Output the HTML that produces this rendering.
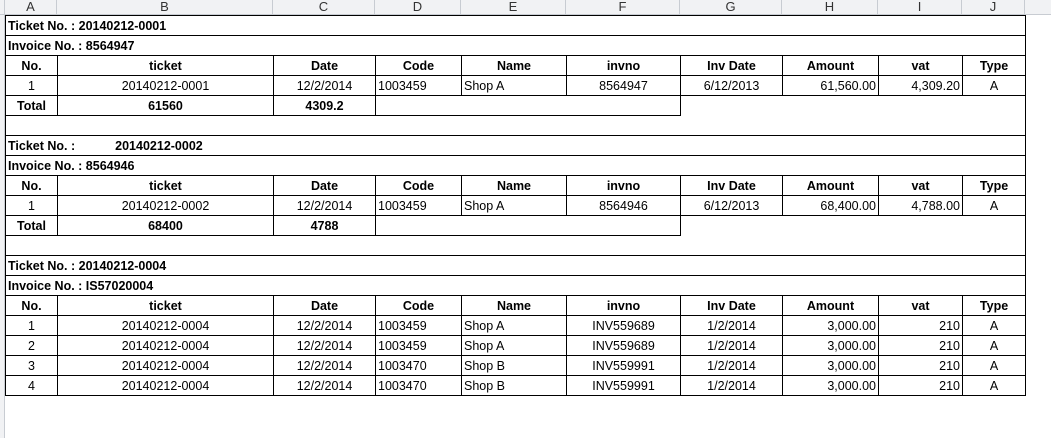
<!DOCTYPE html>
<html><head><style>
body{margin:0;width:1051px;height:438px;background:#fff;overflow:hidden;position:relative;font-family:"Liberation Sans",sans-serif;font-size:12.5px;color:#000}
.hdr{position:absolute;top:0;left:0;width:1051px;height:15px;background:#f1f2f4;border-bottom:1px solid #c8ccd2;box-sizing:border-box}
.hdr div{position:absolute;top:0;height:15px;border-right:1px solid #c8ccd2;box-sizing:border-box;text-align:center;font-size:13px;line-height:14px;color:#333}
.rh{position:absolute;left:0;top:15px;width:5px;height:423px;background:#f1f2f4;border-right:1px solid #c8ccd2;box-sizing:border-box}
table{position:absolute;left:5px;top:15px;border-collapse:collapse;table-layout:fixed;width:1021px}
td{height:19px;padding:0 2px;border:1px solid #000;white-space:nowrap;overflow:hidden;line-height:18px}
.b{font-weight:bold}
.c{text-align:center}.r{text-align:right}
.nb{border-top:none;border-bottom:none;border-left:none}
.blank td{border-top:none;border-bottom:none}
</style></head><body>
<div class="hdr">
<div style="left:0;width:5px"></div>
<div style="left:5px;width:52px">A</div>
<div style="left:57px;width:216px">B</div>
<div style="left:273px;width:102px">C</div>
<div style="left:375px;width:86px">D</div>
<div style="left:461px;width:105px">E</div>
<div style="left:566px;width:114px">F</div>
<div style="left:680px;width:102px">G</div>
<div style="left:782px;width:96px">H</div>
<div style="left:878px;width:84px">I</div>
<div style="left:962px;width:63px">J</div>
</div>
<div class="rh"></div>
<table>
<colgroup><col style="width:52px"><col style="width:216px"><col style="width:102px"><col style="width:86px"><col style="width:105px"><col style="width:114px"><col style="width:102px"><col style="width:96px"><col style="width:84px"><col style="width:63px"></colgroup>
<tr><td colspan="10" class="b">Ticket No. : 20140212-0001</td></tr>
<tr><td colspan="10" class="b">Invoice No. : 8564947</td></tr>
<tr class="b c"><td>No.</td><td>ticket</td><td>Date</td><td>Code</td><td>Name</td><td>invno</td><td>Inv Date</td><td>Amount</td><td>vat</td><td>Type</td></tr>
<tr><td class="c">1</td><td class="c">20140212-0001</td><td class="c">12/2/2014</td><td>1003459</td><td>Shop A</td><td class="c">8564947</td><td class="c">6/12/2013</td><td class="r">61,560.00</td><td class="r">4,309.20</td><td class="c">A</td></tr>
<tr class="b"><td class="c">Total</td><td class="c">61560</td><td class="c">4309.2</td><td colspan="3"></td><td colspan="4" class="nb"></td></tr>
<tr class="blank"><td colspan="10"></td></tr>
<tr><td colspan="10" class="b">Ticket No. :<span style="display:inline-block;width:40px"></span>20140212-0002</td></tr>
<tr><td colspan="10" class="b">Invoice No. : 8564946</td></tr>
<tr class="b c"><td>No.</td><td>ticket</td><td>Date</td><td>Code</td><td>Name</td><td>invno</td><td>Inv Date</td><td>Amount</td><td>vat</td><td>Type</td></tr>
<tr><td class="c">1</td><td class="c">20140212-0002</td><td class="c">12/2/2014</td><td>1003459</td><td>Shop A</td><td class="c">8564946</td><td class="c">6/12/2013</td><td class="r">68,400.00</td><td class="r">4,788.00</td><td class="c">A</td></tr>
<tr class="b"><td class="c">Total</td><td class="c">68400</td><td class="c">4788</td><td colspan="3"></td><td colspan="4" class="nb"></td></tr>
<tr class="blank"><td colspan="10"></td></tr>
<tr><td colspan="10" class="b">Ticket No. : 20140212-0004</td></tr>
<tr><td colspan="10" class="b">Invoice No. : IS57020004</td></tr>
<tr class="b c"><td>No.</td><td>ticket</td><td>Date</td><td>Code</td><td>Name</td><td>invno</td><td>Inv Date</td><td>Amount</td><td>vat</td><td>Type</td></tr>
<tr><td class="c">1</td><td class="c">20140212-0004</td><td class="c">12/2/2014</td><td>1003459</td><td>Shop A</td><td class="c">INV559689</td><td class="c">1/2/2014</td><td class="r">3,000.00</td><td class="r">210</td><td class="c">A</td></tr>
<tr><td class="c">2</td><td class="c">20140212-0004</td><td class="c">12/2/2014</td><td>1003459</td><td>Shop A</td><td class="c">INV559689</td><td class="c">1/2/2014</td><td class="r">3,000.00</td><td class="r">210</td><td class="c">A</td></tr>
<tr><td class="c">3</td><td class="c">20140212-0004</td><td class="c">12/2/2014</td><td>1003470</td><td>Shop B</td><td class="c">INV559991</td><td class="c">1/2/2014</td><td class="r">3,000.00</td><td class="r">210</td><td class="c">A</td></tr>
<tr><td class="c">4</td><td class="c">20140212-0004</td><td class="c">12/2/2014</td><td>1003470</td><td>Shop B</td><td class="c">INV559991</td><td class="c">1/2/2014</td><td class="r">3,000.00</td><td class="r">210</td><td class="c">A</td></tr>
</table>
</body></html>
